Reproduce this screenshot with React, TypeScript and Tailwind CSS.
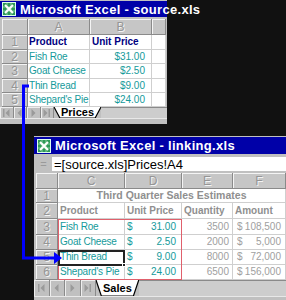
import type { ReactNode } from 'react';

const FONT = "font-['Liberation_Sans',Arial,sans-serif]";
const TEAL = 'text-[#149a9a]';
const GRAYTXT = 'text-[#8f8f8f]';

function ExcelIcon() {
  return (
    <svg width="14" height="14" viewBox="0 0 14 14" className="shrink-0">
      <rect x="0.5" y="0.5" width="13" height="13" fill="#2f9a57" stroke="#dfe" />
      <path d="M1 5h12M1 9h12M5 1v12M9 1v12" stroke="#9fd7b2" strokeWidth="0.8" />
      <path d="M3 3l8 8M11 3l-8 8" stroke="#fff" strokeWidth="2" />
    </svg>
  );
}

function TitleBar({ title, className }: { title: string; className: string }) {
  return (
    <div className={`flex items-center gap-[4px] bg-[#0000a8] pl-[2px] ${className}`}>
      <ExcelIcon />
      <span className="whitespace-nowrap text-[13px] font-bold leading-none tracking-[0.3px] text-white">{title}</span>
    </div>
  );
}

function Head({ className, children }: { className: string; children?: ReactNode }) {
  return (
    <div
      className={`flex shrink-0 items-center justify-center border-b border-r border-[#8a8a8a] bg-[#c6c6c6] text-[12px] leading-none text-[#959595] shadow-[inset_1px_1px_0_#f4f4f4] [text-shadow:1px_1px_0_#f4f4f4] ${className}`}
    >
      {children}
    </div>
  );
}

function Cell({ className, children }: { className: string; children?: ReactNode }) {
  return (
    <div
      className={`flex shrink-0 items-center overflow-hidden whitespace-nowrap border-b border-r border-[#cfcfcf] bg-white px-[2px] leading-none ${className}`}
    >
      {children}
    </div>
  );
}

function NavButton({ kind }: { kind: 'first' | 'prev' | 'next' | 'last' }) {
  return (
    <div className="flex flex-1 items-center justify-center border-r border-[#8a8a8a] bg-[#c0c0c0] shadow-[inset_1px_1px_0_#eee]">
      <svg width="9" height="8" viewBox="0 0 9 8" fill="#9a9a9a">
        {kind === 'first' && (
          <>
            <rect x="1" y="0" width="1.5" height="8" />
            <polygon points="7.5,0 3.5,4 7.5,8" />
          </>
        )}
        {kind === 'prev' && <polygon points="6.5,0 2.5,4 6.5,8" />}
        {kind === 'next' && <polygon points="2.5,0 6.5,4 2.5,8" />}
        {kind === 'last' && (
          <>
            <polygon points="1.5,0 5.5,4 1.5,8" />
            <rect x="6.5" y="0" width="1.5" height="8" />
          </>
        )}
      </svg>
    </div>
  );
}

function SheetTabs({ label, navClass, className }: { label: string; navClass: string; className: string }) {
  return (
    <div className={`flex items-stretch bg-[#c0c0c0] ${className}`}>
      <div className={`flex shrink-0 ${navClass}`}>
        <NavButton kind="first" />
        <NavButton kind="prev" />
        <NavButton kind="next" />
        <NavButton kind="last" />
      </div>
      <div className="relative flex shrink-0 items-center px-[7px]">
        <svg className="absolute inset-0 h-full w-full" viewBox="0 0 40 12" preserveAspectRatio="none">
          <polygon points="0,0 40,0 35,12 5,12" fill="#fff" />
          <polyline
            points="0,0 5,12 35,12 40,0"
            fill="none"
            stroke="#000"
            strokeWidth="1.2"
            vectorEffect="non-scaling-stroke"
          />
        </svg>
        <span className="relative text-[11px] font-bold leading-none text-black">{label}</span>
      </div>
      <div className="flex-1 border-t border-[#8a8a8a] bg-[#cdcdcd]" />
    </div>
  );
}

const sourceRows = [
  { n: '1', a: 'Product', b: 'Unit Price', head: true, h: 'h-[15px]' },
  { n: '2', a: 'Fish Roe', b: '$31.00', h: 'h-[14px]' },
  { n: '3', a: 'Goat Cheese', b: '$2.50', h: 'h-[15px]' },
  { n: '4', a: 'Thin Bread', b: '$9.00', h: 'h-[14px]' },
  { n: '5', a: "Shepard's Pie", b: '$24.00', h: 'h-[14px]' },
];

function SourceWindow() {
  return (
    <div className="absolute left-0 top-0 flex h-[124px] w-[167px] flex-col bg-[#c0c0c0] pt-px">
      <TitleBar title="Microsoft Excel - source.xls" className="h-[16px]" />
      <div className="mt-[2px] flex flex-col pl-[2px]">
        <div className="flex h-[16px]">
          <Head className="w-[26px]" />
          <Head className="w-[62px]">A</Head>
          <Head className="w-[62px]">B</Head>
          <Head className="w-[14px]" />
        </div>
        {sourceRows.map(r => (
          <div key={r.n} className={`flex ${r.h}`}>
            <Head className="w-[26px]">{r.n}</Head>
            <Cell
              className={`w-[62px] pl-px ${r.head ? 'text-[10px] font-bold text-[#000080]' : `text-[10px] tracking-[-0.2px] ${TEAL}`}`}
            >
              {r.a}
            </Cell>
            <Cell
              className={`w-[62px] ${r.head ? 'text-[10px] font-bold text-[#000080]' : `justify-end pr-[6px] text-[10px] ${TEAL}`}`}
            >
              {r.b}
            </Cell>
            <Cell className="w-[14px]" />
          </div>
        ))}
      </div>
      <SheetTabs label="Prices" navClass="w-[54px]" className="h-[11px]" />
      <div className="flex-1 border-t border-[#e8e8e8] bg-[#c0c0c0]" />
    </div>
  );
}

const salesRows = [
  { n: '3', c: 'Fish Roe', d: '31.00', e: '3500', f: '108,500', h: 'h-[16px]' },
  { n: '4', c: 'Goat Cheese', d: '2.50', e: '2000', f: '5,000', h: 'h-[15px]' },
  { n: '5', c: 'Thin Bread', d: '9.00', e: '8000', f: '72,000', h: 'h-[15px]' },
  { n: '6', c: "Shepard's Pie", d: '24.00', e: '6500', f: '156,000', h: 'h-[15px]' },
];

function LinkingWindow() {
  return (
    <div className="absolute left-[34px] top-[136px] flex h-[164px] w-[252px] flex-col bg-[#c0c0c0] pt-px">
      <TitleBar title="Microsoft Excel - linking.xls" className="h-[17px] pl-[3px]" />
      <div className="mt-[3px] flex h-[14px] pl-px">
        <div className="flex w-[17px] items-center justify-center bg-[#c0c0c0] text-[11px] leading-none text-[#9a9a9a]">
          =
        </div>
        <div className="flex flex-1 items-center bg-white pl-[2px] text-[13px] leading-none text-black">
          =[source.xls]Prices!A4
        </div>
      </div>
      <div className="relative mt-[2px] flex flex-col pl-[2px]">
        <div className="flex h-[16px]">
          <Head className="w-[22px]" />
          <Head className="w-[67px]">C</Head>
          <Head className="w-[57px]">D</Head>
          <Head className="w-[51px]">E</Head>
          <Head className="w-[53px]">F</Head>
        </div>
        <div className="flex h-[14px]">
          <Head className="w-[22px]">1</Head>
          <Cell className={`w-[228px] justify-center text-[10.5px] font-bold ${GRAYTXT}`}>
            Third Quarter Sales Estimates
          </Cell>
        </div>
        <div className="flex h-[16px]">
          <Head className="w-[22px]">2</Head>
          <Cell className={`w-[67px] text-[10px] font-bold ${GRAYTXT}`}>Product</Cell>
          <Cell className={`w-[57px] text-[10px] font-bold ${GRAYTXT}`}>Unit Price</Cell>
          <Cell className={`w-[51px] text-[10px] font-bold ${GRAYTXT}`}>Quantity</Cell>
          <Cell className={`w-[53px] text-[10px] font-bold ${GRAYTXT}`}>Amount</Cell>
        </div>
        {salesRows.map(r => (
          <div key={r.n} className={`flex ${r.h}`}>
            <Head className="w-[22px]">{r.n}</Head>
            <Cell className={`w-[67px] text-[10px] tracking-[-0.2px] ${TEAL}`}>{r.c}</Cell>
            <Cell className={`w-[57px] justify-between pr-[5px] text-[10px] ${TEAL}`}>
              <span>$</span>
              <span>{r.d}</span>
            </Cell>
            <Cell className="w-[51px] justify-end pr-[3px] text-[10px] text-[#a0a0a0]">{r.e}</Cell>
            <Cell className="w-[53px] justify-between pl-[4px] pr-[4px] text-[10px] text-[#a0a0a0]">
              <span>$</span>
              <span>{r.f}</span>
            </Cell>
          </div>
        ))}
        {/* linked range and active cell */}
        <div className="pointer-events-none absolute left-[24px] top-[46px] h-[61px] w-[124px] border border-[#e0606c]" />
        <div className="pointer-events-none absolute left-[24px] top-[77px] h-[16px] w-[67px] border-2 border-[#222]">
          <div className="absolute -bottom-[3px] -right-[3px] h-[4px] w-[4px] border border-white bg-[#222]" />
        </div>
      </div>
      <SheetTabs label="Sales" navClass="w-[62px]" className="h-[16px]" />
      <div className="flex-1 border-t border-[#e8e8e8] bg-[#c0c0c0]" />
    </div>
  );
}

function LinkArrow() {
  return (
    <svg className="pointer-events-none absolute inset-0" width="286" height="300" viewBox="0 0 286 300">
      <path d="M29 86H23.5V258H55" fill="none" stroke="#0000ff" strokeWidth="3" />
      <polygon points="54,252 62,258 54,264" fill="#0000ff" />
    </svg>
  );
}

export default function App() {
  return (
    <div className={`relative h-[300px] w-[286px] overflow-hidden bg-[#111] ${FONT}`}>
      <SourceWindow />
      <LinkingWindow />
      <LinkArrow />
    </div>
  );
}
